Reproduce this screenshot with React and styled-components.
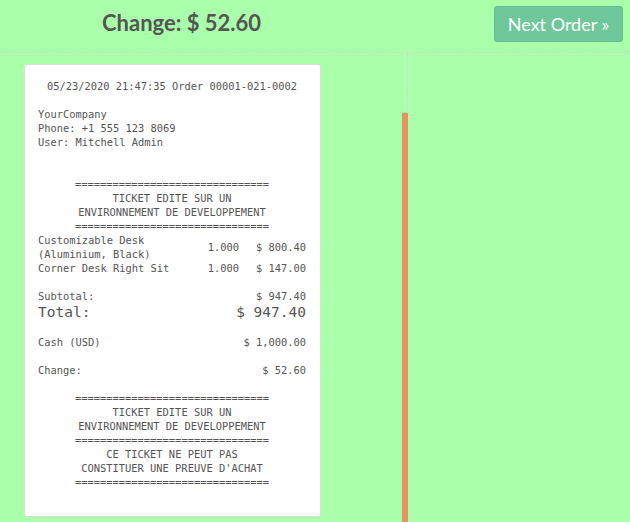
import React from 'react'
import styled, { createGlobalStyle } from 'styled-components'

const GlobalStyle = createGlobalStyle`
    body {
        margin: 0;
        background-color: #aaffaa;
        font-family: Lato, "Liberation Sans", sans-serif;
    }
`

const Screen = styled.div`
    display: flex;
    flex-direction: column;
    height: 100vh;
    overflow: hidden;
`

const TopBar = styled.div`
    display: flex;
    align-items: center;
    height: 52px;
    border-bottom: 1px dashed #cbdccb;
`

const Title = styled.h1`
    margin: 0 0 8px 102px;
    font-size: 22px;
    font-weight: 700;
    color: #555555;
`

const NextButton = styled.button`
    align-self: flex-start;
    margin: 6px 7px 0 auto;
    width: 129px;
    height: 36px;
    border: 1px solid #64bb8f;
    border-radius: 3px;
    background-color: #6ec89b;
    color: #ffffff;
    font-family: Lato, "Liberation Sans", sans-serif;
    font-size: 18px;
    cursor: pointer;
`

const Body = styled.div`
    display: flex;
    flex: 1;
`

const ReceiptPane = styled.div`
    display: flex;
    width: 407px;
    border-right: 1px dashed #cbdccb;
`

const ReceiptColumn = styled.div`
    flex: 1;
    padding: 11px 0 0 24px;
`

const ScrollRail = styled.div`
    width: 6px;
    margin-top: 60px;
    margin-right: -1px;
    background-color: #e8935f;
`

const Receipt = styled.div`
    width: 297px;
    box-sizing: border-box;
    padding: 14px 14px 27px 13px;
    background-color: #ffffff;
    border: 1px solid #dddddd;
    border-radius: 3px;
    font-family: "DejaVu Sans Mono", "Liberation Mono", monospace;
    font-size: 10.4px;
    line-height: 14px;
    color: #555555;
`

const Line = styled.div`
    text-align: ${props => props.center ? 'center' : 'left'};
    white-space: pre;
`

const Block = styled.div`
    margin-top: ${props => props.gap || 0}px;
`

const OrderLine = styled.div`
    display: grid;
    grid-template-columns: 1fr 60px 67px;
    align-items: center;
`

const Cell = styled.div`
    text-align: ${props => props.right ? 'right' : 'left'};
`

const AmountRow = styled.div`
    display: flex;
    justify-content: space-between;
    margin-top: ${props => props.gap || 0}px;
    font-size: ${props => props.big ? '14.5px' : 'inherit'};
    line-height: ${props => props.big ? '18px' : 'inherit'};
`

const EQUALS = '==============================='

const orderLines = [
    { name: 'Customizable Desk (Aluminium, Black)', qty: '1.000', price: '$ 800.40' },
    { name: 'Corner Desk Right Sit', qty: '1.000', price: '$ 147.00' },
]

const Banner = ({ lines }) => (
    <div>
        {lines.map((text, key) => <Line key={key} center>{text}</Line>)}
    </div>
)

class App extends React.Component {
    render() {
        return (
            <Screen>
                <GlobalStyle />
                <TopBar>
                    <Title>Change: $ 52.60</Title>
                    <NextButton>Next Order »</NextButton>
                </TopBar>
                <Body>
                    <ReceiptPane>
                        <ReceiptColumn>
                            <Receipt>
                                <Line center>05/23/2020 21:47:35 Order 00001-021-0002</Line>
                                <Block gap={14}>
                                    <Line>YourCompany</Line>
                                    <Line>Phone: +1 555 123 8069</Line>
                                    <Line>User: Mitchell Admin</Line>
                                </Block>
                                <Block gap={28}>
                                    <Banner lines={[EQUALS, 'TICKET EDITE SUR UN', 'ENVIRONNEMENT DE DEVELOPPEMENT', EQUALS]} />
                                </Block>
                                {orderLines.map((line, key) => (
                                    <OrderLine key={key}>
                                        <Cell>{line.name}</Cell>
                                        <Cell right>{line.qty}</Cell>
                                        <Cell right>{line.price}</Cell>
                                    </OrderLine>
                                ))}
                                <AmountRow gap={14}>
                                    <span>Subtotal:</span>
                                    <span>$ 947.40</span>
                                </AmountRow>
                                <AmountRow big>
                                    <span>Total:</span>
                                    <span>$ 947.40</span>
                                </AmountRow>
                                <AmountRow gap={14}>
                                    <span>Cash (USD)</span>
                                    <span>$ 1,000.00</span>
                                </AmountRow>
                                <AmountRow gap={14}>
                                    <span>Change:</span>
                                    <span>$ 52.60</span>
                                </AmountRow>
                                <Block gap={14}>
                                    <Banner lines={[
                                        EQUALS,
                                        'TICKET EDITE SUR UN',
                                        'ENVIRONNEMENT DE DEVELOPPEMENT',
                                        EQUALS,
                                        'CE TICKET NE PEUT PAS',
                                        "CONSTITUER UNE PREUVE D'ACHAT",
                                        EQUALS,
                                    ]} />
                                </Block>
                            </Receipt>
                        </ReceiptColumn>
                        <ScrollRail />
                    </ReceiptPane>
                </Body>
            </Screen>
        )
    }
}

export default App
